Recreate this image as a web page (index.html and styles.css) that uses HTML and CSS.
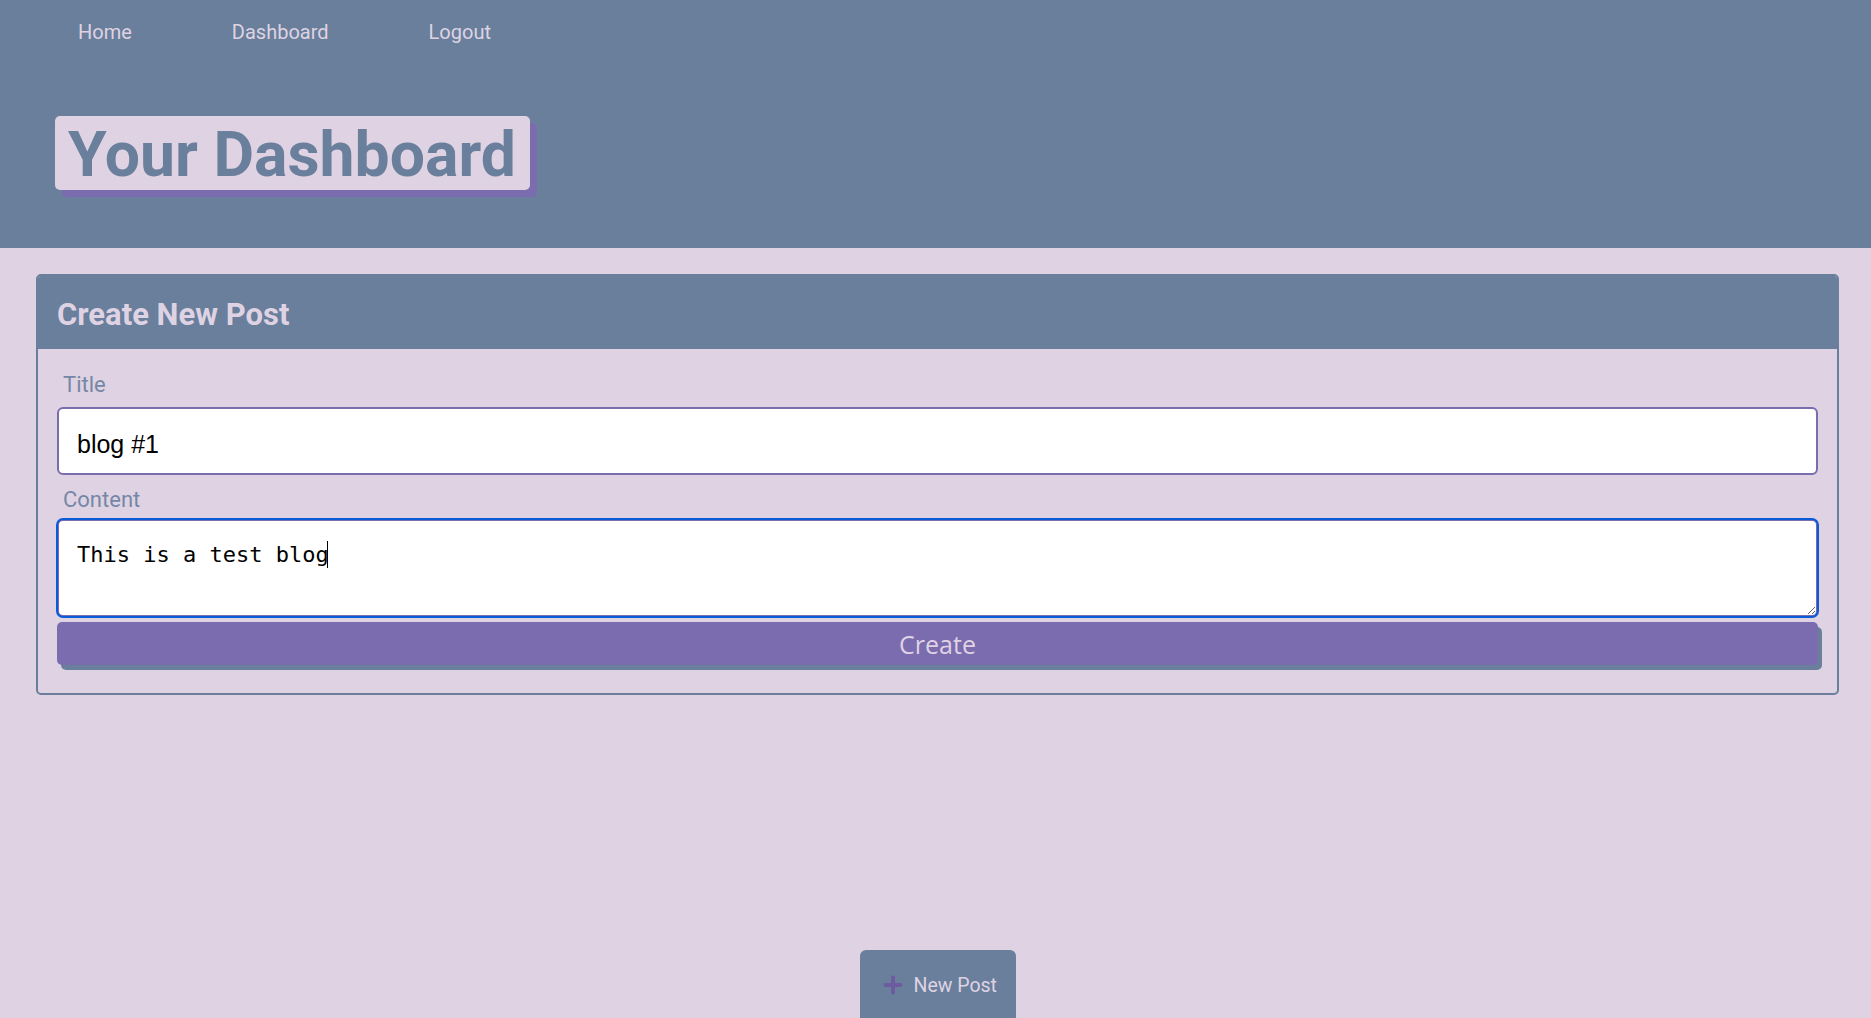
FILE: index.html
```html
<!DOCTYPE html>
<html lang="en">
<head>
<meta charset="utf-8">
<title>Your Dashboard</title>
<link rel="stylesheet" href="styles.css">
</head>
<body>
<header class="site-header">
  <nav class="nav">
    <a class="nav-link" href="#">Home</a>
    <a class="nav-link" href="#">Dashboard</a>
    <a class="nav-link" href="#">Logout</a>
  </nav>
  <h1 class="page-title">Your Dashboard</h1>
</header>
<main class="main">
  <section class="card">
    <h2 class="card-header">Create New Post</h2>
    <form class="card-body">
      <label class="field-label" for="title">Title</label>
      <input class="text-input" id="title" type="text" value="blog #1">
      <label class="field-label content-label" for="content">Content</label>
      <div class="area-wrap">
        <textarea class="text-area focused" id="content">This is a test blog</textarea>
        <span class="caret"></span>
      </div>
      <button class="create-btn" type="button">Create</button>
    </form>
  </section>
  <div class="new-post-row">
    <button class="new-post-btn" type="button">
      <svg class="plus" width="20" height="20" viewBox="0 0 20 20"><path d="M10 2.5v15M2.5 10h15" stroke="#6c5b9e" stroke-width="4" stroke-linecap="round"/></svg>
      <span>New Post</span>
    </button>
  </div>
</main>
</body>
</html>
```
FILE: styles.css
```css
* { box-sizing: border-box; }
html, body { margin: 0; padding: 0; }
body {
  background: #dfd3e3;
  font-family: "Roboto", "Noto Sans", sans-serif;
  height: 1018px;
  overflow: hidden;
}
.site-header {
  background: #697f9c;
  height: 248px;
  padding-top: 18px;
}
.nav {
  display: flex;
  gap: 100px;
  padding-left: 78px;
}
.nav-link {
  color: #dfd3e3;
  text-decoration: none;
  font-size: 20px;
  line-height: 28px;
}
.page-title {
  display: inline-block;
  margin: 70px 0 0 55px;
  padding: 3px 14px 0 13px;
  height: 74px;
  line-height: 71px;
  background: #dfd3e3;
  color: #697f9c;
  font-size: 62.5px;
  font-weight: 700;
  border-radius: 5px;
  box-shadow: 7px 7px 0 #7b6baf;
}
.main { padding: 26px 32px 0 36px; }
.card {
  border: 2px solid #697f9c;
  border-radius: 5px;
  overflow: hidden;
}
.card-header {
  margin: 0;
  background: #697f9c;
  color: #dfd3e3;
  font-size: 31px;
  font-weight: 700;
  height: 73px;
  padding: 4px 0 0 19px;
  line-height: 69px;
}
.card-body {
  display: flex;
  flex-direction: column;
  padding: 23px 19px 28px 19px;
}
.field-label {
  color: #7587a6;
  font-size: 22px;
  line-height: 26px;
  padding-left: 6px;
  margin-bottom: 9px;
}
.content-label { margin-top: 12px; margin-bottom: 6px; }
.text-input {
  height: 68px;
  border: 2px solid #7b6baf;
  border-radius: 6px;
  background: #fff;
  padding: 6px 18px 0;
  font-family: "Liberation Sans", Arial, sans-serif;
  font-size: 25px;
  color: #000;
}
.area-wrap { position: relative; }
.text-area {
  display: block;
  width: 100%;
  height: 98px;
  border: 2px solid #7b6baf;
  border-radius: 6px;
  background: #fff;
  padding: 21px 18px 0;
  font-family: "DejaVu Sans Mono", "Liberation Mono", monospace;
  font-size: 22px;
  line-height: 26px;
  color: #000;
  resize: vertical;
}
.text-area.focused {
  outline: 2px solid #0a5bd8;
  outline-offset: -1px;
}
.caret {
  position: absolute;
  left: 270px;
  top: 22px;
  width: 1px;
  height: 27px;
  background: #000;
}
.create-btn {
  margin-top: 5px;
  height: 43px;
  padding-top: 2px;
  border: 0;
  border-radius: 5px;
  background: #7b6baf;
  color: #dfd3e3;
  font-family: "Open Sans", "Noto Sans", sans-serif;
  font-size: 25px;
  box-shadow: 4px 5px 0 #697f9c;
}
.new-post-row {
  display: flex;
  justify-content: center;
  padding-top: 255px;
}
.new-post-btn {
  display: flex;
  align-items: center;
  gap: 11px;
  width: 156px;
  height: 80px;
  padding: 0 0 10px 23px;
  border: 0;
  border-radius: 6px;
  background: #697f9c;
  color: #dfd3e3;
  font-family: "Roboto", sans-serif;
  font-size: 19.5px;
}
.plus { flex: none; }
```
